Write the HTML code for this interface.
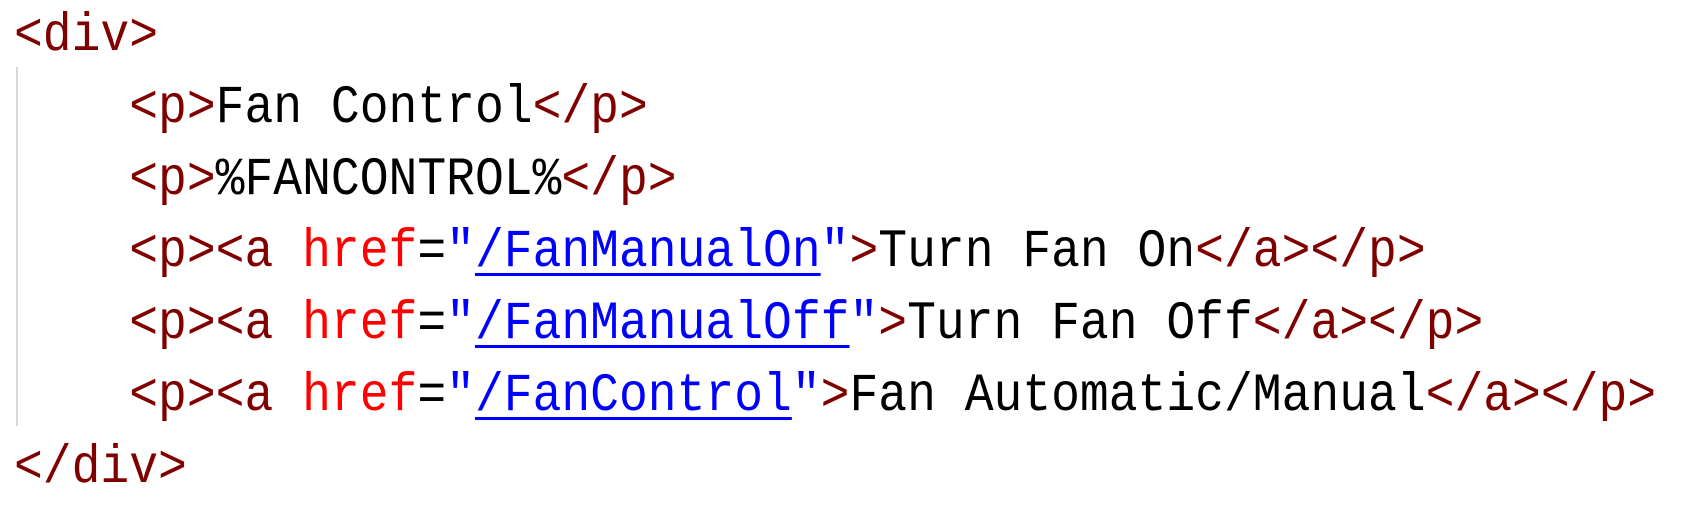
<!DOCTYPE html>
<html><head><style>
html,body{margin:0;padding:0;background:#fff;width:1692px;height:498px;overflow:hidden}
pre{margin:0;position:absolute;left:14px;top:1px;font-family:"Liberation Mono",monospace;font-size:54px;line-height:72px;color:#000;transform:scaleX(0.889);transform-origin:0 0}
.t{color:#800000}.a{color:#ff0000}.q{color:#0000ff}
.u{color:#0000ff;text-decoration:underline;text-decoration-thickness:3px;text-underline-offset:7px}
.g{position:absolute;left:16px;top:67px;width:2px;height:359px;background:#d8d8d8}
</style></head><body>
<div class="g"></div>
<pre><span class="t">&lt;div&gt;</span>
    <span class="t">&lt;p&gt;</span>Fan Control<span class="t">&lt;/p&gt;</span>
    <span class="t">&lt;p&gt;</span>%FANCONTROL%<span class="t">&lt;/p&gt;</span>
    <span class="t">&lt;p&gt;&lt;a </span><span class="a">href</span>=<span class="q">"</span><span class="u">/FanManualOn</span><span class="q">"</span><span class="t">&gt;</span>Turn Fan On<span class="t">&lt;/a&gt;&lt;/p&gt;</span>
    <span class="t">&lt;p&gt;&lt;a </span><span class="a">href</span>=<span class="q">"</span><span class="u">/FanManualOff</span><span class="q">"</span><span class="t">&gt;</span>Turn Fan Off<span class="t">&lt;/a&gt;&lt;/p&gt;</span>
    <span class="t">&lt;p&gt;&lt;a </span><span class="a">href</span>=<span class="q">"</span><span class="u">/FanControl</span><span class="q">"</span><span class="t">&gt;</span>Fan Automatic/Manual<span class="t">&lt;/a&gt;&lt;/p&gt;</span>
<span class="t">&lt;/div&gt;</span></pre>
</body></html>
